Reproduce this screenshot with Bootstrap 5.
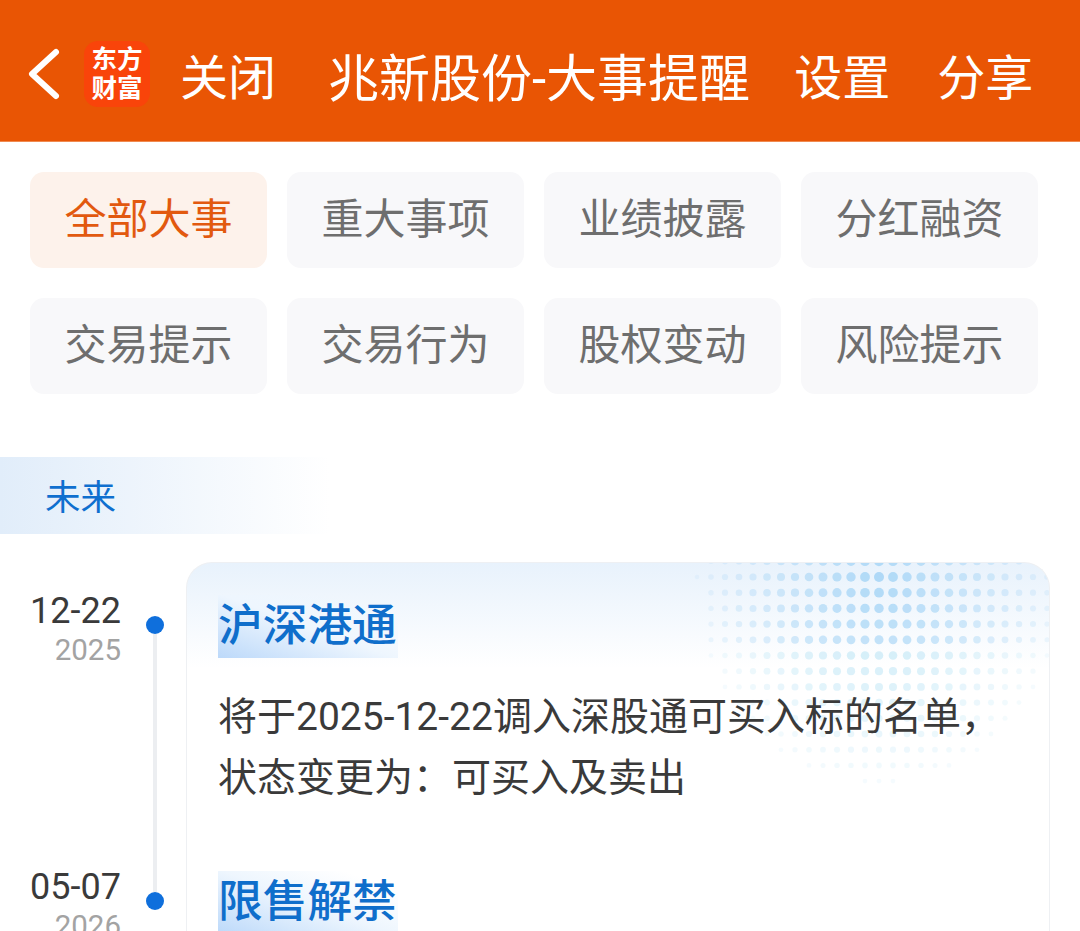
<!DOCTYPE html>
<html lang="zh-CN">
<head>
  <meta charset="UTF-8">
  <meta name="viewport" content="width=device-width, initial-scale=1">
  <title>兆新股份-大事提醒</title>
  <link href="https://cdn.jsdelivr.net/npm/bootstrap@5.3.0/dist/css/bootstrap.min.css" rel="stylesheet">
  <style>
    html, body {
      height: 931px;
      overflow: hidden;
      background: #fff;
      font-family: Roboto, "Noto Sans CJK SC", sans-serif;
    }
    .top-bar {
      height: 142px;
      background: #e95504;
      border-bottom: 1px solid #f08a50;
      padding-left: 27px;
      padding-top: 17px;
      color: #fff;
      font-size: 48px;
      line-height: 1;
    }
    .back-icon { width: 34px; height: 54px; margin-right: 23px; flex-shrink: 0; position: relative; top: -5px; }
    .app-logo {
      width: 66px;
      height: 66px;
      border-radius: 14px;
      background: #f9440a;
      font-size: 25.5px;
      font-weight: 700;
      line-height: 29px;
      text-align: center;
      margin-right: 30px;
      flex-shrink: 0;
      padding-top: 4px;
      position: relative;
      top: -5px;
    }
    .bar-title { margin-left: 52px; margin-right: 44px; font-size: 51px; white-space: nowrap; }
    .bar-link { white-space: nowrap; }
    .bar-link + .bar-link { margin-left: 47px; }
    .tab-grid {
      display: grid;
      grid-template-columns: repeat(4, 237px);
      grid-auto-rows: 96px;
      column-gap: 20px;
      row-gap: 30px;
      padding: 30px 0 0 30px;
    }
    .tab-item {
      background: #f8f8fa;
      border-radius: 14px;
      color: #6e6e6e;
      font-size: 42px;
      line-height: 96px;
      text-align: center;
    }
    .tab-item.active { background: #fdf2eb; color: #e2590f; }
    .section-label {
      margin-top: 63px;
      height: 77px;
      width: 330px;
      padding-left: 45px;
      background: linear-gradient(90deg, #e1edfa, #fff);
      color: #0f6fcf;
      font-size: 35.5px;
      line-height: 83px;
    }
    .timeline { margin-top: 28px; }
    .date-col {
      width: 187px;
      flex-shrink: 0;
    }
    .date-row {
      position: relative;
      height: 276px;
      padding: 31px 0 0 0;
      width: 121px;
      text-align: right;
    }
    .date-day { font-size: 36px; line-height: 36px; color: #3a3a3a; }
    .date-year { font-size: 29.5px; line-height: 32px; color: #a3a3a3; margin-top: 5px; }
    .date-dot {
      position: absolute;
      left: 146px;
      top: 54px;
      width: 18px;
      height: 18px;
      border-radius: 50%;
      background: #0f6fdc;
    }
    .date-line {
      position: absolute;
      left: 153px;
      top: 72px;
      width: 4px;
      height: 258px;
      background: #eceef1;
    }
    .event-card {
      position: relative;
      width: 864px;
      height: 400px;
      margin-left: -1px;
      border: 1px solid #eef0f3;
      border-bottom: 0;
      border-radius: 26px 26px 0 0;
      overflow: hidden;
      padding: 32px 0 0 31px;
      background: linear-gradient(180deg, #e8f2fc 0, #fff 105px);
    }
    .card-dots { position: absolute; top: 0; right: 0; }
    .event-title {
      position: relative;
      display: inline-block;
      height: 63px;
      width: 180px;
      font-size: 44.7px;
      font-weight: 500;
      line-height: 63px;
      color: #0f6ecb;
      background: linear-gradient(20deg, #bcd9fa 0, #eef6fe 50%, rgba(255,255,255,0) 85%);
      white-space: nowrap;
    }
    .event-text {
      position: relative;
      font-size: 39px;
      line-height: 61px;
      color: #3a3a3a;
      margin-top: 29px;
      white-space: nowrap;
    }
    .event-block { height: 276px; }
  </style>
</head>
<body>
  <div class="top-bar d-flex align-items-center">
    <svg class="back-icon" viewBox="0 0 34 54">
      <path d="M29 5 L5 27 L29 49" fill="none" stroke="#fff" stroke-width="6" stroke-linecap="round" stroke-linejoin="round"/>
    </svg>
    <div class="app-logo"><div>东方</div><div>财富</div></div>
    <span class="bar-link">关闭</span>
    <span class="bar-title">兆新股份-大事提醒</span>
    <span class="bar-link">设置</span>
    <span class="bar-link">分享</span>
  </div>

  <div class="tab-grid">
    <div class="tab-item active">全部大事</div>
    <div class="tab-item">重大事项</div>
    <div class="tab-item">业绩披露</div>
    <div class="tab-item">分红融资</div>
    <div class="tab-item">交易提示</div>
    <div class="tab-item">交易行为</div>
    <div class="tab-item">股权变动</div>
    <div class="tab-item">风险提示</div>
  </div>

  <div class="section-label">未来</div>

  <div class="timeline d-flex">
    <div class="date-col">
      <div class="date-row">
        <div class="date-day">12-22</div>
        <div class="date-year">2025</div>
        <span class="date-dot"></span>
        <span class="date-line"></span>
      </div>
      <div class="date-row">
        <div class="date-day">05-07</div>
        <div class="date-year">2026</div>
        <span class="date-dot"></span>
      </div>
    </div>
    <div class="event-card">
      <svg class="card-dots" id="cardDots" width="360" height="260"></svg>
      <div class="event-block">
        <div class="event-title">沪深港通</div>
        <div class="event-text">将于2025-12-22调入深股通可买入标的名单，<br>状态变更为：可买入及卖出</div>
      </div>
      <div class="event-block">
        <div class="event-title">限售解禁</div>
      </div>
    </div>
  </div>

  <script>
    // halftone dots in the card corner, largest near the top centre
    var svg = document.getElementById('cardDots');
    var out = '';
    for (var row = 0; row < 16; row++) {
      for (var col = 0; col < 26; col++) {
        var x = 8 + col * 14;
        var y = -1.7 + row * 15.7;
        var dx = (x - 190) / 190;
        var dy = (y - 14) / 215;
        var k = 1 - Math.sqrt(dx * dx + dy * dy);
        if (k <= 0.04) continue;
        var r = (1.6 + 3.4 * Math.sqrt(k)).toFixed(1);
        var a = (0.12 + 0.8 * k).toFixed(2);
        var fill = y < 90 ? '#a9d6f6' : '#bfe6f6';
        out += '<circle cx="' + x + '" cy="' + y + '" r="' + r + '" fill="' + fill + '" fill-opacity="' + a + '"/>';
      }
    }
    svg.innerHTML = out;
  </script>
  <script src="https://cdn.jsdelivr.net/npm/bootstrap@5.3.0/dist/js/bootstrap.bundle.min.js"></script>
</body>
</html>
